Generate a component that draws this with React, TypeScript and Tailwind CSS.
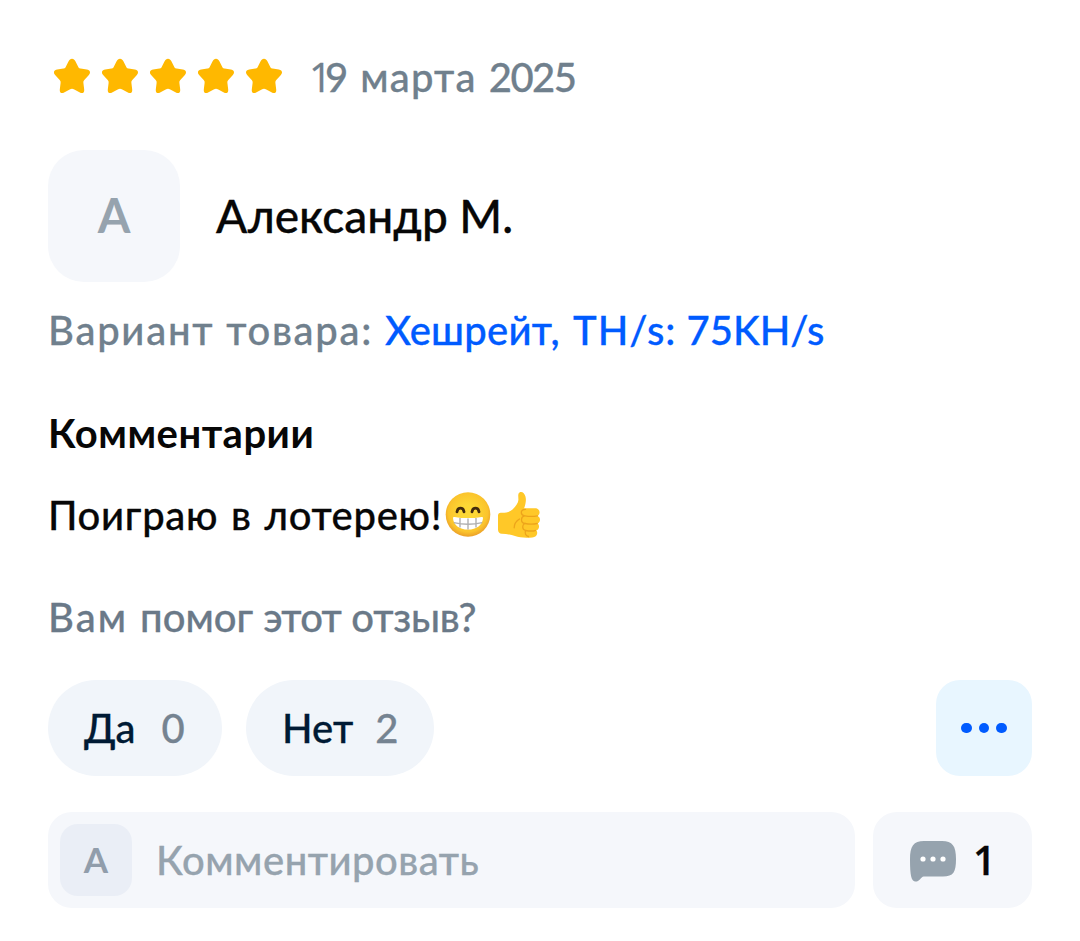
import React, { useState } from "react";

function Star() {
  return (
    <svg className="size-12" viewBox="0 0 48 48" fill="#ffb800">
      <path d="M24 5.8c-1.5 0-2.6.9-3.4 2.5l-2.9 5.6c-.5 1-1.1 1.4-2.3 1.6l-6.2.9c-3.3.5-4.2 3.1-2.1 5.5l4.6 5.1c.8.9 1 1.6.9 2.9l-.8 6.5c-.4 3.3 1.7 4.5 4.3 3.1l5.6-3c1.7-.9 2.9-.9 4.6 0l5.6 3c2.6 1.4 4.7.2 4.3-3.1l-.8-6.5c-.1-1.3.1-2 .9-2.9l4.6-5.1c2.1-2.4 1.2-5-2.1-5.5l-6.2-.9c-1.2-.2-1.8-.6-2.3-1.6l-2.9-5.6c-.8-1.6-1.9-2.5-3.4-2.5z" />
    </svg>
  );
}

function GrinEmoji() {
  return (
    <svg
      className="h-[46px] w-[46px]"
      viewBox="0 0 46 46"
      role="img"
      aria-label="😁"
    >
      <defs>
        <radialGradient id="face" cx="50%" cy="45%" r="55%">
          <stop offset="0.3" stopColor="#fdd835" />
          <stop offset="0.8" stopColor="#fbc42c" />
          <stop offset="1" stopColor="#eb9f28" />
        </radialGradient>
      </defs>
      <circle cx="23" cy="22.5" r="22.3" fill="url(#face)" />
      <path
        d="M12 19.8c.8-4.8 6.200-4.800 7 0M27 19.800c.8-4.800 6.200-4.800 7 0"
        fill="none"
        stroke="#422b0d"
        strokeWidth="2.8"
        strokeLinecap="round"
      />
      <path
        d="M8 26c0-.9.7-1.2 1.5-1.1 9 1.6 18 1.6 27 0 .8-.1 1.5.2 1.5 1.1-.3 7.2-6.5 11.600-15 11.600S8.300 33.200 8 26z"
        fill="#fff"
      />
      <path
        d="M8.8 30.6c9 2 19.400 2 28.400 0M15 26v9.500M23 26.500v11M31 26v9.500"
        fill="none"
        stroke="#b0b0b0"
        strokeWidth="1.4"
      />
    </svg>
  );
}

function ThumbEmoji() {
  return (
    <svg
      className="h-12 w-[44px]"
      viewBox="0 0 44 48"
      role="img"
      aria-label="👍"
    >
      <path
        d="M1 24.5c0-1.700 1-2.800 2.800-2.800 5 .2 8.700-.6 11.700-3.300 3.500-3.200 5.700-6.400 5.900-9.300.1-2.700-.5-4.500.1-6.300C22.300.7 25 .3 26.700 2.200c3.300 3.700 2.400 9.500.4 15.100h10.800c3 0 4.700 1.700 4.700 4 0 1.900-.9 3.100-2 3.600 1.600.7 2.400 2 2.400 3.800s-1 3.200-2.500 3.800c1.100.7 1.600 1.900 1.500 3.400-.2 1.900-1.200 3-2.700 3.400.7.800 1 1.700.9 2.900-.3 2.600-2 4-4.900 4.200-6.300.5-12.700.3-17.300-1.400-3.700-1.400-8.700-2-13.200-2.200C2.400 42.600 1 40.900 1 38.500z"
        fill="#ffc828"
      />
      <path
        d="M28.5 18.300c-2.800 0-4.200 1.300-4.200 3.200 0 1.700 1.100 3 3.300 3.400-2 .5-3.100 1.800-3.100 3.800s1.200 3.400 3.300 3.800c-1.500.7-2.200 1.800-2.100 3.500.1 1.900 1.200 3.100 2.900 3.500-1.200 2.700.1 5.400 2.900 6M28 24.900c4 .7 8.500.7 12.500 0M28 32.500c4 .8 8 .8 12.200 0M28.800 39.500c3.600.7 6.800.7 9.700 0M22.500 28c-3.300 2-5.300 5.200-5.300 8.800"
        fill="none"
        stroke="#eda41b"
        strokeWidth="1.3"
        strokeLinecap="round"
      />
    </svg>
  );
}

function ChatIcon() {
  return (
    <svg className="mt-[2px] h-[41px] w-[46px]" viewBox="0 0 46 41">
      <path
        d="M0 18.500C0 5 3.500 0 14 0h18c10.500 0 14 5 14 18s-2.500 17.500-13 17.500H13.700c-1.500 0-2.400 1.500-3.600 2.700C8.300 40 6.700 40.800 5 40.400 1.300 39.700 0 34.500 0 18.500z"
        fill="#96a3ae"
      />
      <g fill="#fff">
        <circle cx="13" cy="18" r="2.6" />
        <circle cx="23" cy="18" r="2.6" />
        <circle cx="33" cy="18" r="2.6" />
      </g>
    </svg>
  );
}

function App() {
  const data = [
    { label: "Да", count: 0, width: "w-[174px] pl-9 gap-[26px]" },
    { label: "Нет", count: 2, width: "w-[188px] pl-9 gap-[22px]" },
  ];

  const [votes] = useState(data);

  return (
    <main className="flex h-[941px] w-[1080px] flex-col bg-white px-12 pt-[53px] font-['Lato',sans-serif] text-[40px] font-medium text-[#070707] [-webkit-text-stroke-width:0.3px]">
      <div className="flex h-12 items-center">
        {[1, 2, 3, 4, 5].map((star) => (
          <Star key={star} />
        ))}
        <p className="ml-[21px] leading-[48px] whitespace-nowrap text-[#70808d]">
          <span className="font-['Open_Sans',sans-serif] tracking-[-7px]">
            1
          </span>
          <span className="mr-[2px]">9</span>{" "}
          <span className="mr-[2px] tracking-[1.2px]">марта</span>{" "}
          <span className="tracking-[-1.5px]">2025</span>
        </p>
      </div>

      <div className="mt-[49px] flex h-[132px] items-center">
        <div className="flex size-[132px] items-center justify-center rounded-[36px] bg-[#f5f7fb] pb-px text-[47px] font-bold text-[#96a3ae] [-webkit-text-stroke-width:0]">
          A
        </div>
        <p className="ml-9 pb-[2px] text-[46px] whitespace-nowrap">
          Александр М.
        </p>
      </div>

      <p className="mt-[24px] leading-[48px] whitespace-nowrap text-[#70808d]">
        <span className="tracking-[1.75px]">Вариант товара: </span>
        <span className="text-[#005bff]">
          <span className="tracking-[0.2px]">Хешрейт,</span>{" "}
          <span className="ml-[3px] tracking-[1px]">TH/s:</span> 75KH/s
        </span>
      </p>

      <h3 className="mt-[55px] leading-[48px] font-bold tracking-[0.5px] [-webkit-text-stroke-width:0]">
        Комментарии
      </h3>

      <div className="mt-[34px] flex h-12 items-center">
        <p className="leading-[48px] tracking-[0.7px] [word-spacing:2px] whitespace-nowrap">
          Поиграю в лотерею!
        </p>
        <span className="ml-[3px] flex items-center gap-[6px]">
          <GrinEmoji />
          <ThumbEmoji />
        </span>
      </div>

      <p className="mt-[54px] leading-[48px] whitespace-nowrap text-[#6a7988]">
        <span className="tracking-[2px]">Вам </span>
        помог <span className="tracking-[-0.6px]">этот</span>{" "}
        <span className="tracking-[-0.2px]">отзыв?</span>
      </p>

      <div className="mt-[39px] flex h-24 gap-6">
        {votes.map((vote) => (
          <button
            key={vote.label}
            className={`flex items-center rounded-full bg-[#f1f5fa] text-[#001a34] ${vote.width}`}
          >
            <span>{vote.label}</span>
            <span className="text-[#758391]">{vote.count}</span>
          </button>
        ))}
        <button className="ml-auto flex size-24 items-center justify-center gap-[7px] rounded-3xl bg-[#e8f6ff]">
          <span className="size-[10.5px] rounded-full bg-[#005bff]" />
          <span className="size-[10.5px] rounded-full bg-[#005bff]" />
          <span className="size-[10.5px] rounded-full bg-[#005bff]" />
        </button>
      </div>

      <div className="mt-9 flex h-24 gap-[18px]">
        <div className="flex w-[807px] items-center rounded-3xl bg-[#f5f7fb] pl-3 text-[#96a3ae]">
          <div className="flex size-[72px] items-center justify-center rounded-[18px] bg-[#eaeef6] pb-[2px] text-[35px] font-bold text-[#919dab] [-webkit-text-stroke-width:0]">
            A
          </div>
          <p className="ml-6 tracking-[0.5px] whitespace-nowrap">
            Комментировать
          </p>
        </div>
        <button className="flex w-[159px] items-center rounded-3xl bg-[#f5f7fb] pl-[37px]">
          <ChatIcon />
          <span className="ml-[17px] font-['Open_Sans',sans-serif] font-semibold">
            1
          </span>
        </button>
      </div>
    </main>
  );
}

export default App;
